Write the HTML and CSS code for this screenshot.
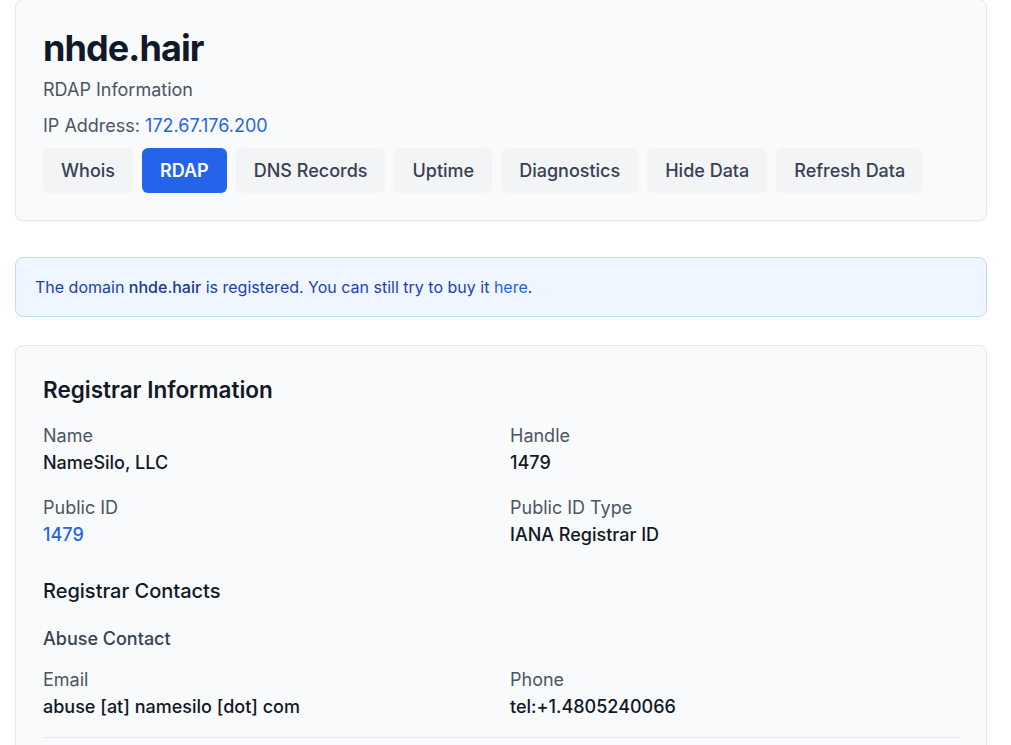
FILE: index.html
```html
<!DOCTYPE html>
<html lang="en">
<head>
  <meta charset="UTF-8">
  <meta name="viewport" content="width=device-width, initial-scale=1.0">
  <title>nhde.hair - RDAP Information</title>
  <link rel="stylesheet" href="styles.css">
</head>
<body>
<div class="page">

  <div class="card header">
    <h1>nhde.hair</h1>
    <p class="sub">RDAP Information</p>
    <p class="sub">IP Address: <a href="#">172.67.176.200</a></p>
    <nav class="tabs">
      <button class="tab">Whois</button>
      <button class="tab active">RDAP</button>
      <button class="tab">DNS Records</button>
      <button class="tab">Uptime</button>
      <button class="tab">Diagnostics</button>
      <button class="tab">Hide Data</button>
      <button class="tab">Refresh Data</button>
    </nav>
  </div>

  <div class="notice">
    The domain <strong>nhde.hair</strong> is registered. You can still try to buy it <a href="#">here</a>.
  </div>

  <div class="card">
    <h2>Registrar Information</h2>
    <div class="fields">
      <div>
        <div class="label">Name</div>
        <div class="value">NameSilo, LLC</div>
      </div>
      <div>
        <div class="label">Handle</div>
        <div class="value">1479</div>
      </div>
      <div>
        <div class="label">Public ID</div>
        <div class="value"><a href="#">1479</a></div>
      </div>
      <div>
        <div class="label">Public ID Type</div>
        <div class="value">IANA Registrar ID</div>
      </div>
    </div>

    <h3>Registrar Contacts</h3>
    <div class="contact">
      <h4>Abuse Contact</h4>
      <div class="fields">
        <div>
          <div class="label">Email</div>
          <div class="value">abuse [at] namesilo [dot] com</div>
        </div>
        <div>
          <div class="label">Phone</div>
          <div class="value">tel:+1.4805240066</div>
        </div>
      </div>
    </div>
  </div>

</div>
</body>
</html>
```

FILE: styles.css
```css
body {
  margin: 0;
  font-family: Inter, "Noto Sans", Arial, sans-serif;
  color: #111827;
  background: #fff;
}
a {
  color: #2563eb;
  text-decoration: none;
}
.page {
  margin-top: -1px;
  padding: 0 24px 40px 15px;
}
.card {
  background: #f9fafb;
  border: 1px solid #e5e7eb;
  border-radius: 8px;
  box-shadow: 0 1px 2px rgba(0, 0, 0, 0.04);
  padding: 28px 27px;
}
.header {
  padding-bottom: 27px;
}
h1 {
  margin: 0;
  font-size: 36px;
  line-height: 40px;
  font-weight: 700;
  letter-spacing: -0.025em;
  color: #111827;
}
.sub {
  margin: 8px 0 0;
  font-size: 18px;
  line-height: 28px;
  color: #4b5563;
}
.tabs {
  display: flex;
  flex-wrap: wrap;
  gap: 9px;
  margin-top: 8px;
}
.tab {
  font-family: inherit;
  font-size: 18px;
  line-height: 29px;
  font-weight: 500;
  padding: 8px 18px;
  border: 0;
  border-radius: 6px;
  background: #f3f4f6;
  color: #374151;
}
.tab.active {
  background: #2563eb;
  color: #fff;
  font-weight: 600;
}
.notice {
  margin: 36px 0 28px;
  background: #eff6ff;
  border: 1px solid #bfdbfe;
  border-radius: 8px;
  padding: 17px 19px;
  font-size: 16px;
  line-height: 24px;
  color: #1e40af;
}
.notice strong {
  font-weight: 500;
  color: #1e3a8a;
}
h2 {
  margin: 1px 0 17px;
  font-size: 22.5px;
  line-height: 30px;
  font-weight: 600;
}
.fields {
  display: grid;
  grid-template-columns: 1fr 1fr;
  column-gap: 18px;
  row-gap: 18px;
}
.label {
  font-size: 18px;
  line-height: 27px;
  color: #4b5563;
}
.value {
  font-size: 18px;
  line-height: 27px;
  font-weight: 500;
  color: #111827;
}
h3 {
  margin: 29px 0 0;
  font-size: 20px;
  line-height: 28px;
  font-weight: 500;
}
.contact {
  margin-top: 20px;
  padding-bottom: 17px;
  border-bottom: 1px solid #e5e7eb;
}
h4 {
  margin: 0 0 14px;
  font-size: 18px;
  line-height: 27px;
  font-weight: 500;
  color: #374151;
}
```
